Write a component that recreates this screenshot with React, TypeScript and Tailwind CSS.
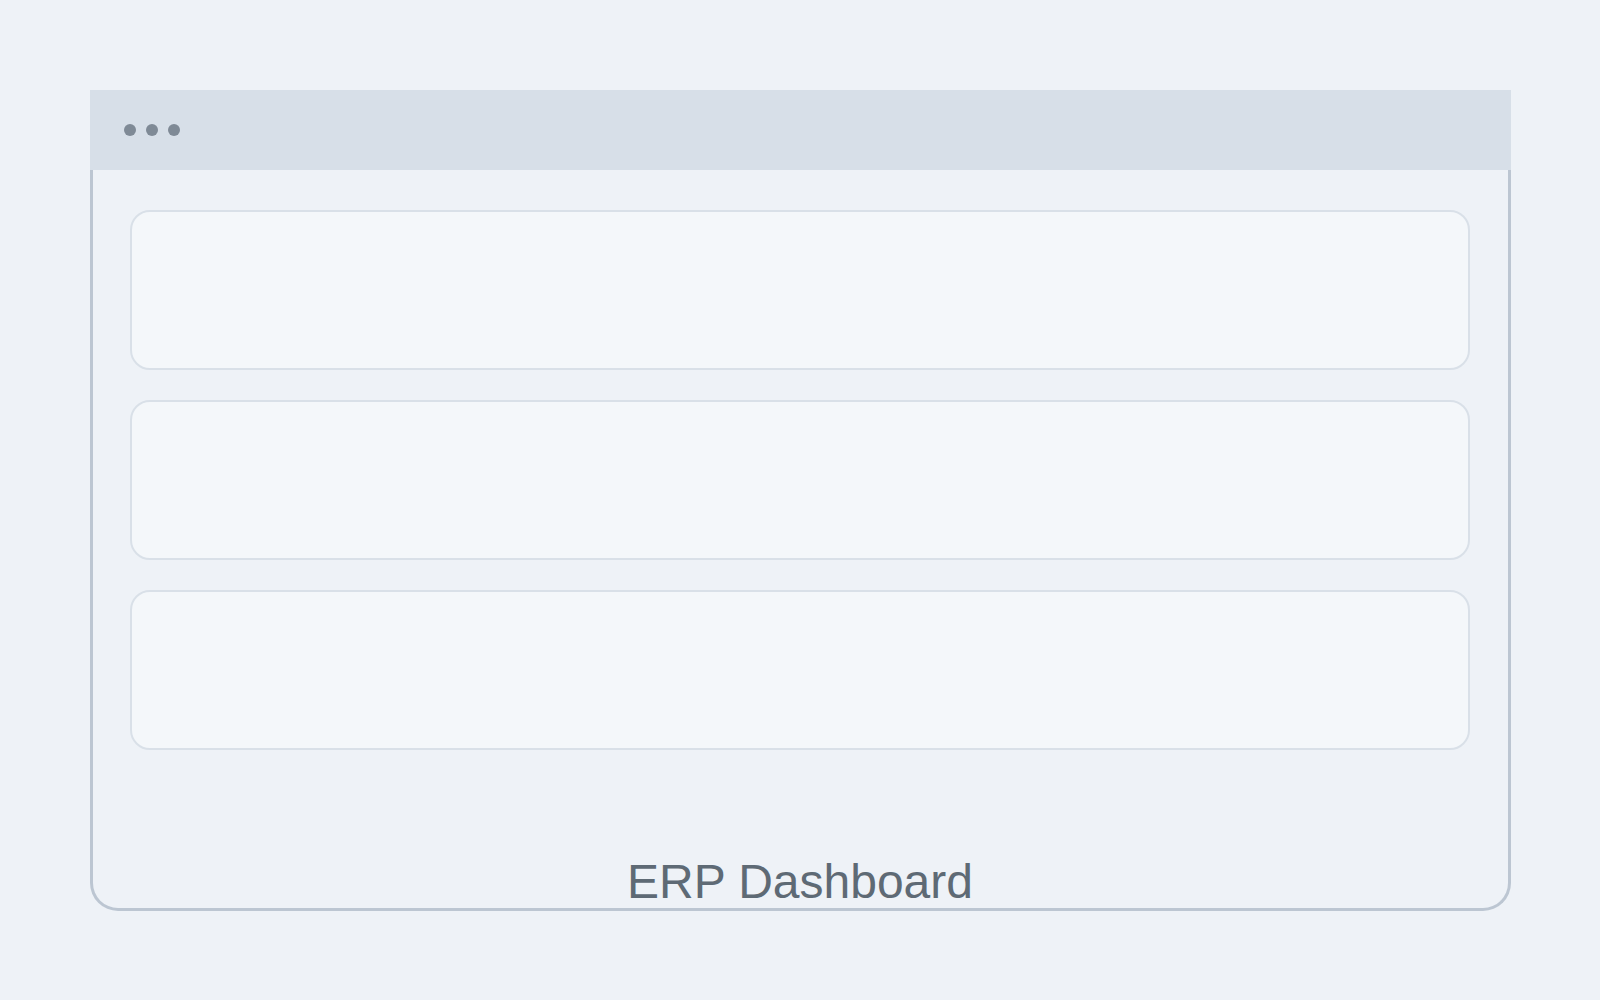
export default function App() {
  return (
    <div className="min-h-screen w-full bg-[#eef2f7] pl-[90px] pt-[90px] font-['Liberation_Sans',Arial,sans-serif]">
      <div className="flex h-[821px] w-[1421px] flex-col">
        {/* Title bar */}
        <div className="flex h-[80px] shrink-0 items-center gap-[10px] bg-[#d7dfe8] pl-[34px]">
          <span className="size-[12px] rounded-full bg-[#7f8a96]" />
          <span className="size-[12px] rounded-full bg-[#7f8a96]" />
          <span className="size-[12px] rounded-full bg-[#7f8a96]" />
        </div>

        {/* Window body */}
        <div className="flex flex-1 flex-col rounded-b-[28px] border-x-[3px] border-b-[3px] border-[#bcc6d2] pl-[37px] pr-[38px] pt-[40px]">
          <div className="flex flex-col gap-[30px]">
            <div className="h-[160px] rounded-[20px] border-2 border-[#d9e0e8] bg-[#f4f7fa]" />
            <div className="h-[160px] rounded-[20px] border-2 border-[#d9e0e8] bg-[#f4f7fa]" />
            <div className="h-[160px] rounded-[20px] border-2 border-[#d9e0e8] bg-[#f4f7fa]" />
          </div>
          <div className="mt-auto mb-px text-center text-[48px] leading-[50px] text-[#5e6a75]">
            ERP Dashboard
          </div>
        </div>
      </div>
    </div>
  );
}
